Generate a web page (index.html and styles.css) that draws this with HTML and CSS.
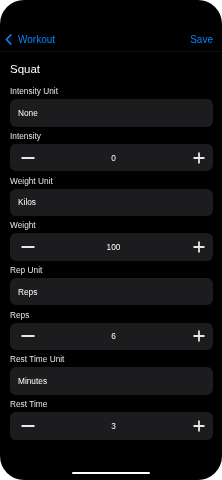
FILE: index.html
```html
<!DOCTYPE html>
<html lang="en">
<head>
    <meta charset="UTF-8">
    <meta name="viewport" content="width=device-width, initial-scale=1.0">
    <title>Edit Exercise</title>
    <link rel="stylesheet" href="styles.css">
</head>
<body>
    <div class="screen">
        <div class="nav">
            <a class="back" href="#">
                <svg class="chevron" viewBox="0 0 7 11" width="7" height="11">
                    <path d="M5.8 1 L1.4 5.5 L5.8 10" fill="none" stroke="#0a84ff" stroke-width="1.7" stroke-linecap="round" stroke-linejoin="round"/>
                </svg>
                <span>Workout</span>
            </a>
            <a class="save" href="#">Save</a>
        </div>

        <div class="content">
            <h1 class="title">Squat</h1>

            <div class="group">
                <div class="label">Intensity Unit</div>
                <div class="field">None</div>
            </div>

            <div class="group">
                <div class="label">Intensity</div>
                <div class="stepper">
                    <button class="step"><svg viewBox="0 0 14 14" width="14" height="14"><path d="M0.5 7 H13.5" stroke="#e8e8e8" stroke-width="1.9"/></svg></button>
                    <div class="value">0</div>
                    <button class="step"><svg viewBox="0 0 14 14" width="14" height="14"><path d="M1.5 7 H12.5 M7 1.5 V12.5" stroke="#e8e8e8" stroke-width="1.8"/></svg></button>
                </div>
            </div>

            <div class="group">
                <div class="label">Weight Unit</div>
                <div class="field">Kilos</div>
            </div>

            <div class="group">
                <div class="label">Weight</div>
                <div class="stepper">
                    <button class="step"><svg viewBox="0 0 14 14" width="14" height="14"><path d="M0.5 7 H13.5" stroke="#e8e8e8" stroke-width="1.9"/></svg></button>
                    <div class="value">100</div>
                    <button class="step"><svg viewBox="0 0 14 14" width="14" height="14"><path d="M1.5 7 H12.5 M7 1.5 V12.5" stroke="#e8e8e8" stroke-width="1.8"/></svg></button>
                </div>
            </div>

            <div class="group">
                <div class="label">Rep Unit</div>
                <div class="field">Reps</div>
            </div>

            <div class="group">
                <div class="label">Reps</div>
                <div class="stepper">
                    <button class="step"><svg viewBox="0 0 14 14" width="14" height="14"><path d="M0.5 7 H13.5" stroke="#e8e8e8" stroke-width="1.9"/></svg></button>
                    <div class="value">6</div>
                    <button class="step"><svg viewBox="0 0 14 14" width="14" height="14"><path d="M1.5 7 H12.5 M7 1.5 V12.5" stroke="#e8e8e8" stroke-width="1.8"/></svg></button>
                </div>
            </div>

            <div class="group">
                <div class="label">Rest Time Unit</div>
                <div class="field">Minutes</div>
            </div>

            <div class="group">
                <div class="label">Rest Time</div>
                <div class="stepper">
                    <button class="step"><svg viewBox="0 0 14 14" width="14" height="14"><path d="M0.5 7 H13.5" stroke="#e8e8e8" stroke-width="1.9"/></svg></button>
                    <div class="value">3</div>
                    <button class="step"><svg viewBox="0 0 14 14" width="14" height="14"><path d="M1.5 7 H12.5 M7 1.5 V12.5" stroke="#e8e8e8" stroke-width="1.8"/></svg></button>
                </div>
            </div>
        </div>

        <div class="home-bar"></div>
    </div>
</body>
</html>
```

FILE: styles.css
```css
* {
    margin: 0;
    padding: 0;
    box-sizing: border-box;
}

body {
    font-family: 'Liberation Sans', Arial, sans-serif;
    background-color: #ffffff;
    color: #ffffff;
    -webkit-font-smoothing: antialiased;
}

.screen {
    width: 222px;
    height: 480px;
    background-color: #000000;
    border-radius: 24px;
    overflow: hidden;
    display: flex;
    flex-direction: column;
    will-change: transform;
}

.nav {
    margin-top: 28px;
    height: 24px;
    padding: 0 9px 0 5px;
    display: flex;
    align-items: center;
    justify-content: space-between;
    border-bottom: 1px solid #0e0e10;
}

.nav a {
    color: #0a84ff;
    text-decoration: none;
    font-size: 10px;
}

.back {
    display: flex;
    align-items: center;
    gap: 6px;
}

.chevron {
    display: block;
}

.content {
    padding: 0 9px 0 10px;
}

.title {
    font-size: 11.5px;
    font-weight: normal;
    line-height: 14px;
    margin-top: 10px;
    margin-bottom: 6px;
}

.group {
    padding-top: 4.2px;
}

.label {
    font-size: 8.3px;
    line-height: 10px;
    color: #e6e6e6;
    margin-bottom: 3px;
}

.field {
    height: 27.5px;
    background-color: #1c1c1e;
    border-radius: 6px;
    font-size: 8.3px;
    display: flex;
    align-items: center;
    padding-left: 8px;
}

.stepper {
    height: 27.5px;
    background-color: #1c1c1e;
    border-radius: 6px;
    display: flex;
    align-items: center;
    padding: 0 4px 0 8px;
}

.step {
    width: 20px;
    height: 20px;
    background: none;
    border: none;
    display: flex;
    align-items: center;
    justify-content: center;
    cursor: pointer;
}

.step svg {
    display: block;
}

.value {
    flex: 1;
    text-align: center;
    font-size: 8.3px;
}

.home-bar {
    margin: auto auto 6px;
    width: 78px;
    height: 2.5px;
    border-radius: 2px;
    background-color: #ffffff;
}
```
